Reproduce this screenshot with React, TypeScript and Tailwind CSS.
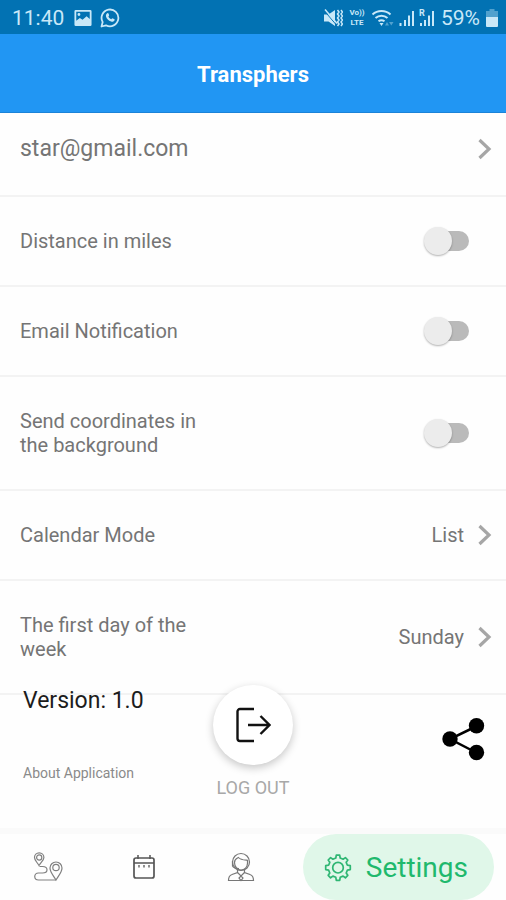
import { useState } from "react";
import type { ReactNode } from "react";

function StatusBar() {
  return (
    <div className="flex h-[34px] items-center justify-between bg-[#0272b3] pl-3 pr-2 pt-[2px] text-[#c9e8f8]">
      <div className="flex items-center gap-2">
        <span className="mr-[2px] text-[21px] leading-6">11:40</span>
        <svg viewBox="0 0 20 20" className="size-[18px]" aria-hidden="true">
          <path
            fill="currentColor"
            fillRule="evenodd"
            d="M2 1h16a1.500 1.500 0 0 1 1.500 1.500v15A1.500 1.500 0 0 1 18 19H2a1.500 1.500 0 0 1-1.500-1.500v-15A1.500 1.500 0 0 1 2 1zm.5 2v10l4-3 3 2L14 8l3.500 3V3zm3 1.500a1.600 1.600 0 1 1 0 3.200 1.600 1.600 0 0 1 0-3.200z"
          />
        </svg>
        <svg viewBox="0 0 20 20" className="size-5" aria-hidden="true">
          <path
            fill="none"
            stroke="currentColor"
            strokeWidth="1.800"
            strokeLinejoin="round"
            d="M1.500 18.500l1.200-4.400A8.400 8.400 0 1 1 6 17.300z"
          />
          <path
            fill="currentColor"
            d="M7.300 5.200c.5-.3 1-.1 1.200.4l.6 1.500c.1.400 0 .7-.7 1.400.6 1.300 1.600 2.200 2.900 2.800.7-.9 1-1.100 1.400-.9l1.500.7c.5.300.5.700.3 1.200-.5 1.300-1.900 1.800-3.400 1.300-2.700-.9-4.400-2.800-5.100-5.100-.3-1.400.3-2.700 1.300-3.300z"
          />
        </svg>
      </div>
      <div className="flex items-center gap-1">
        <svg viewBox="0 0 20 20" className="size-5" aria-hidden="true">
          <path fill="currentColor" d="M1 6.500h4.500L12 2v16l-6.500-4.500H1z" />
          <path d="M1 2.500l12 14" stroke="#0272b3" strokeWidth="1" />
          <path d="M2 1.500l12 14" stroke="currentColor" strokeWidth="1.500" />
          <path
            d="M14.500 2l1.500 2-1.500 2 1.500 2-1.500 2 1.500 2-1.500 2 1.500 2-1.500 2M18 2l1.500 2L18 6l1.500 2-1.500 2 1.500 2-1.500 2 1.500 2-1.500 2"
            fill="none"
            stroke="currentColor"
            strokeWidth="1.500"
          />
        </svg>
        <span className="flex w-5 flex-col items-center text-[8px] font-bold leading-[10px]">
          <span>Vo))</span>
          <span>LTE</span>
        </span>
        <svg viewBox="0 0 24 20" className="h-5 w-6" aria-hidden="true">
          <g fill="none" stroke="currentColor" strokeWidth="2">
            <path d="M1.500 6.500a13.500 13.500 0 0 1 18 0" />
            <path d="M4.500 10a9 9 0 0 1 12 0" />
            <path d="M7.500 13.300a5 5 0 0 1 6 0" />
          </g>
          <path fill="currentColor" d="M8.500 15h4l-2 3z" />
          <path
            fill="currentColor"
            opacity=".4"
            d="M14 17.500h4L16 14zM18 14h4.500l-2.200 3.500z"
          />
        </svg>
        <svg viewBox="0 0 16 18" className="h-[18px] w-4" aria-hidden="true">
          <path
            d="M1.500 14v3M6 11v6M10 6.500V17M14 2v15"
            stroke="currentColor"
            strokeWidth="2"
          />
        </svg>
        <span className="relative">
          <svg viewBox="0 0 16 18" className="h-[18px] w-4" aria-hidden="true">
            <path
              d="M2 14v3M6 11v6M10 6.500V17M14 2v15"
              stroke="currentColor"
              strokeWidth="2"
            />
          </svg>
          <span className="absolute left-0 top-0 text-[9px] font-bold leading-[8px]">
            R
          </span>
        </span>
        <span className="mx-[2px] text-[21px] leading-6">59%</span>
        <svg viewBox="0 0 12 18" className="h-[18px] w-3" aria-hidden="true">
          <path fill="currentColor" opacity=".4" d="M3.500 0h5v2H12v6H0V2h3.500z" />
          <path fill="currentColor" d="M0 8h12v9a1 1 0 0 1-1 1H1a1 1 0 0 1-1-1z" />
        </svg>
      </div>
    </div>
  );
}

function Chevron() {
  return (
    <svg viewBox="0 0 14 22" className="h-[22px] w-[14px]" aria-hidden="true">
      <path
        d="M1.500 2l9.500 9-9.500 9"
        fill="none"
        stroke="#a6a6a6"
        strokeWidth="3.200"
      />
    </svg>
  );
}

function SwitchRow({ id, label }: { id: string; label: string }) {
  const [on, setOn] = useState(false);
  return (
    <li className="flex min-h-[90px] items-center justify-between border-b-2 border-[#f3f3f3] py-8 pl-5 pr-[37px]">
      <label htmlFor={id} className="w-[190px]">
        {label}
      </label>
      <input
        id={id}
        type="checkbox"
        role="switch"
        checked={on}
        onChange={(e) => setOn(e.target.checked)}
        className="relative h-5 w-10 appearance-none rounded-full bg-[#bababa] before:absolute before:-left-[5px] before:-top-1 before:size-7 before:rounded-full before:bg-[#ececec] before:shadow-[0_1px_2px_rgba(0,0,0,0.3)] checked:before:left-[17px]"
      />
    </li>
  );
}

function LinkRow({ label, value }: { label: string; value: string }) {
  return (
    <li className="border-b-2 border-[#f3f3f3]">
      <button
        type="button"
        className="flex min-h-[88px] w-full items-center justify-between py-8 pl-5 pr-[14px] text-left"
      >
        <span className="w-[190px]">{label}</span>
        <span className="flex items-center gap-[14px]">
          {value}
          <Chevron />
        </span>
      </button>
    </li>
  );
}

function RouteIcon() {
  return (
    <svg viewBox="0 0 30 30" className="size-[30px]" fill="none" stroke="#808080" strokeWidth="1.200" aria-hidden="true">
      <path d="M6 13.500C3.500 9.500 1.500 8 1.500 5.500a4.700 4.700 0 0 1 9.400 0C10.900 8 8.500 9.500 6 13.500z" />
      <circle cx="6.200" cy="5.500" r="2.600" />
      <path d="M23 28c-3-5-6-8-6-12a6 6 0 0 1 12 0c0 4-3 7-6 12z" />
      <circle cx="23" cy="15.500" r="3.200" />
      <path d="M6.500 14.500h3c6 0 6 6.500 0 6.500H5.500c-5 0-5 7 0 7H23" />
    </svg>
  );
}

function CalendarIcon() {
  return (
    <svg viewBox="0 0 24 26" className="h-[26px] w-6" fill="none" stroke="#555" aria-hidden="true">
      <rect x="2" y="4" width="20" height="20" rx="2" strokeWidth="1.700" />
      <path d="M2 9h20" strokeWidth="1.500" />
      <path d="M6 1v4M18 1v4" strokeWidth="1.500" />
      <path d="M7 11v2.500M12 11v2.500M17 11v2.500" strokeWidth="1.300" />
    </svg>
  );
}

function AgentIcon() {
  return (
    <svg viewBox="0 0 28 30" className="h-[30px] w-7" fill="none" stroke="#777" strokeWidth="1.200" aria-hidden="true">
      <circle cx="14" cy="10" r="8.500" />
      <path d="M7.500 10.500c0-3.500 2-4 4-5 2 2.500 6 2.500 9 2.800v3c0 4-3 6.700-6.500 6.700s-6.500-3-6.500-7.500z" />
      <path d="M5.500 9v5c1 2 3.500 2.500 6.500 2.500" />
      <path d="M10.500 17.500v3L5 22.500c-3 1-3.500 3-3.500 6h25c0-3-.5-5-3.500-6l-5.500-2v-3" />
      <path d="M10.500 20.500L14 24l3.500-3.500M14 24l-2 2 2 2.500 2-2.500z" />
    </svg>
  );
}

function GearIcon() {
  return (
    <svg viewBox="0 0 28 28" className="size-7" fill="none" stroke="#2fb673" strokeWidth="1.700" strokeLinejoin="round" aria-hidden="true">
      <path d="M11.800 4l.5-2.800h3.400l.5 2.800 2.900 1.200 2.300-1.600L23.800 6l-1.600 2.300 1.200 2.900 2.900.5v3.900l-2.900.5-1.200 2.900 1.600 2.300-2.400 2.500-2.300-1.700-2.900 1.200-.5 3h-3.400l-.5-3-2.900-1.200-2.300 1.700-2.400-2.500L5.800 19l-1.200-2.900-2.900-.5v-3.900l2.900-.5 1.200-2.900L4.200 6l2.400-2.400 2.300 1.600z" />
      <circle cx="14" cy="13.700" r="5.300" />
    </svg>
  );
}

function NavButton({ label, children }: { label: string; children: ReactNode }) {
  return (
    <button type="button" aria-label={label} className="flex flex-1 justify-center">
      {children}
    </button>
  );
}

export default function App() {
  return (
    <div className="flex min-h-screen flex-col bg-[#fefefe] font-[Roboto,sans-serif]">
      <StatusBar />
      <header className="flex h-[79px] items-center justify-center border-b border-[#1b83d8] bg-[#2196f3] pt-1">
        <h1 className="text-[22px] font-bold leading-7 text-white">Transphers</h1>
      </header>

      <main className="flex flex-1 flex-col">
        <ul className="text-[20px] leading-6 text-[#757575]">
          <li className="border-b-2 border-[#f3f3f3]">
            <button
              type="button"
              className="flex w-full items-center justify-between pb-8 pl-5 pr-[14px] pt-[22px] text-[23px] leading-7"
            >
              star@gmail.com
              <Chevron />
            </button>
          </li>
          <SwitchRow id="miles" label="Distance in miles" />
          <SwitchRow id="email" label="Email Notification" />
          <SwitchRow id="coords" label="Send coordinates in the background" />
          <LinkRow label="Calendar Mode" value="List" />
          <LinkRow label="The first day of the week" value="Sunday" />
        </ul>

        {/* the log out button overlaps the last divider */}
        <section className="relative -mt-[10px] grid flex-1 grid-cols-3 items-start">
          <div className="pl-[23px]">
            <p className="pt-[2px] text-[23px] leading-7 text-[#1c1c1c]">Version: 1.0</p>
            <a href="#about" className="mt-12 block text-[14px] leading-5 text-[#8a8a8a]">
              About Application
            </a>
          </div>
          <button type="button" className="flex flex-col items-center gap-[11px]">
            <span className="flex size-20 items-center justify-center rounded-full bg-white shadow-[0_3px_8px_rgba(0,0,0,0.22)]">
              <svg viewBox="0 0 36 36" className="size-9" fill="none" stroke="#111" strokeWidth="2.400" aria-hidden="true">
                <path d="M19 2H5a2.500 2.500 0 0 0-2.500 2.500v27A2.500 2.500 0 0 0 5 34h14" />
                <path d="M13 18h21M25.500 9l9 9-9 9" />
              </svg>
            </span>
            <span className="text-[18px] leading-6 text-[#a8a8a8]">LOG OUT</span>
          </button>
          <button type="button" aria-label="Share" className="mr-[21px] mt-8 justify-self-end">
            <svg viewBox="0 0 44 44" className="size-11" aria-hidden="true">
              <path d="M36 9L9 22l27 14" fill="none" stroke="#000" strokeWidth="2.500" />
              <circle cx="9" cy="22" r="7.700" />
              <circle cx="35.500" cy="8.700" r="7.700" />
              <circle cx="35.500" cy="35.500" r="7.700" />
            </svg>
          </button>
        </section>
      </main>

      <nav className="flex items-center border-t-6 border-[#fafafa] pr-3">
        <NavButton label="Routes">
          <RouteIcon />
        </NavButton>
        <NavButton label="Calendar">
          <CalendarIcon />
        </NavButton>
        <NavButton label="Support">
          <AgentIcon />
        </NavButton>
        <button
          type="button"
          className="ml-[14px] flex h-[66px] items-center gap-[14px] rounded-full bg-[#e0f7e9] pl-[21px] pr-[26px] pt-[2px] text-[28px] leading-8 text-[#1fb96d]"
        >
          <GearIcon />
          Settings
        </button>
      </nav>
    </div>
  );
}
